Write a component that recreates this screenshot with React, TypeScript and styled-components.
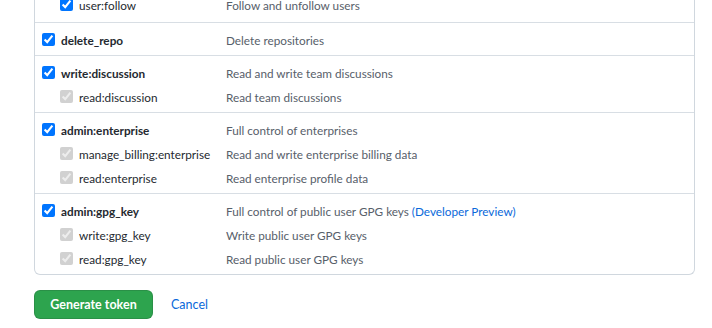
import React from "react";
import styled, { createGlobalStyle } from "styled-components";

const Global = createGlobalStyle`
  html, body { margin: 0; padding: 0; background: #ffffff; }
  body {
    font-family: Lato, "Open Sans", "Liberation Sans", sans-serif;
    font-size: 11.75px;
    color: #24292f;
    overflow: hidden;
  }
`;

const Page = styled.div`
  width: 712px;
  height: 328px;
  overflow: hidden;
  padding: 0 17px 0 34px;
  box-sizing: border-box;
`;

const ScopeBox = styled.div`
  margin-top: -4px;
  border: 1px solid #d0d7de;
  border-top: none;
  border-radius: 0 0 6px 6px;
`;

const Group = styled.div<{ $first?: boolean }>`
  display: flex;
  flex-direction: column;
  gap: 7px;
  padding: ${(p) => (p.$first ? "0 7px 9px" : "8px 7px 7px")};
  border-top: ${(p) => (p.$first ? "none" : "1px solid #d8dee4")};
`;

const Row = styled.div`
  display: grid;
  grid-template-columns: 184px 1fr;
  align-items: center;
  height: 17px;
  padding-top: 1px;
  box-sizing: border-box;
`;

const Label = styled.label<{ $sub?: boolean }>`
  display: flex;
  align-items: center;
  gap: 6px;
  padding-left: ${(p) => (p.$sub ? "18px" : "0")};
  font-weight: ${(p) => (p.$sub ? 400 : 700)};
  color: #24292f;
  white-space: nowrap;
`;

const Check = styled.input`
  margin: -1px 0 0;
  width: 13px;
  height: 13px;
  flex: none;
`;

const Desc = styled.span`
  color: #57606a;
  white-space: nowrap;
`;

const Link = styled.a`
  color: #0969da;
  text-decoration: none;
`;

const Actions = styled.div`
  display: flex;
  align-items: center;
  gap: 18px;
  margin-top: 15px;
`;

const GreenButton = styled.button`
  height: 29px;
  width: 119px;
  padding: 0;
  border: 1px solid rgba(27, 31, 36, 0.15);
  border-radius: 6px;
  background: #2da44e;
  color: #ffffff;
  font-family: inherit;
  font-size: 12.5px;
  font-weight: 700;
  white-space: nowrap;
  cursor: pointer;
`;

const CancelLink = styled.a`
  color: #0969da;
  font-size: 12.5px;
  text-decoration: none;
`;

type Scope = { name: string; desc: React.ReactNode; sub?: boolean };

const groups: { first?: boolean; rows: Scope[] }[] = [
  { first: true, rows: [{ name: "user:follow", desc: "Follow and unfollow users", sub: true }] },
  { rows: [{ name: "delete_repo", desc: "Delete repositories" }] },
  {
    rows: [
      { name: "write:discussion", desc: "Read and write team discussions" },
      { name: "read:discussion", desc: "Read team discussions", sub: true },
    ],
  },
  {
    rows: [
      { name: "admin:enterprise", desc: "Full control of enterprises" },
      { name: "manage_billing:enterprise", desc: "Read and write enterprise billing data", sub: true },
      { name: "read:enterprise", desc: "Read enterprise profile data", sub: true },
    ],
  },
  {
    rows: [
      {
        name: "admin:gpg_key",
        desc: (
          <>
            Full control of public user GPG keys <Link href="#">(Developer Preview)</Link>
          </>
        ),
      },
      { name: "write:gpg_key", desc: "Write public user GPG keys", sub: true },
      { name: "read:gpg_key", desc: "Read public user GPG keys", sub: true },
    ],
  },
];

export default function App() {
  return (
    <>
      <Global />
      <Page>
        <ScopeBox>
          {groups.map((g, gi) => (
            <Group key={gi} $first={g.first}>
              {g.rows.map((r) => {
                const disabled = !!r.sub && !g.first;
                return (
                  <Row key={r.name}>
                    <Label $sub={r.sub}>
                      <Check type="checkbox" defaultChecked disabled={disabled} readOnly />
                      {r.name}
                    </Label>
                    <Desc>{r.desc}</Desc>
                  </Row>
                );
              })}
            </Group>
          ))}
        </ScopeBox>
        <Actions>
          <GreenButton type="button">Generate token</GreenButton>
          <CancelLink href="#">Cancel</CancelLink>
        </Actions>
      </Page>
    </>
  );
}
